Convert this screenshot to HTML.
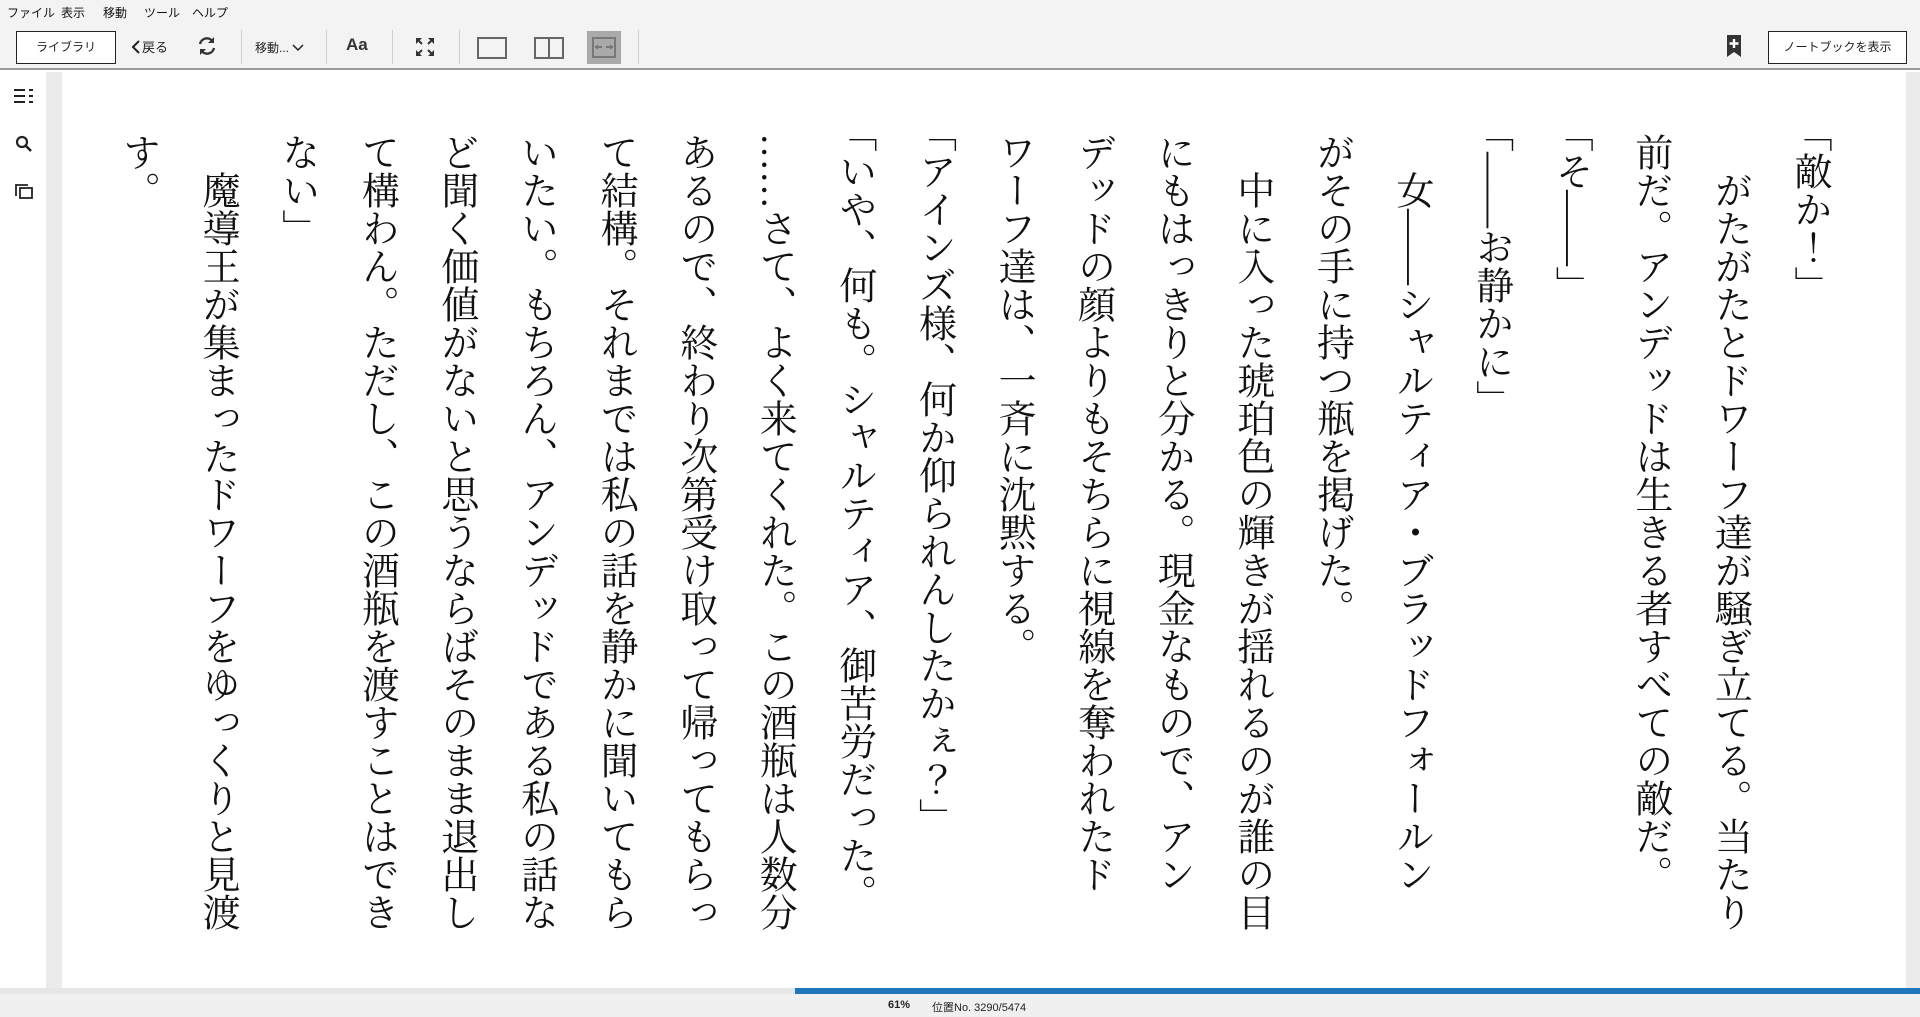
<!DOCTYPE html>
<html><head><meta charset="utf-8"><style>
*{margin:0;padding:0;box-sizing:border-box}
body{width:1920px;height:1017px;overflow:hidden;background:#fff;font-family:"Liberation Sans","Noto Sans CJK JP",sans-serif;position:relative}
.menu{position:absolute;left:0;top:0;width:1920px;height:22px;background:#f3f3f3;font-size:12px;color:#111}
.menu span{position:absolute;top:4px}
.tb{position:absolute;left:0;top:22px;width:1920px;height:48px;background:#f3f3f3;border-bottom:2px solid #9a9a9a}
.btn{position:absolute;top:9px;height:33px;border:1.5px solid #222;background:#fff;font-size:12px;text-align:center;line-height:31px;color:#222}
.sep{position:absolute;top:8px;width:1px;height:34px;background:#cfcfcf}
.ab{position:absolute}
.side{position:absolute;left:0;top:72px;width:46px;height:916px;background:#fff}
.gl{position:absolute;left:46px;top:72px;width:16px;height:916px;background:#ebebeb}
.gr{position:absolute;left:1906px;top:72px;width:14px;height:916px;background:#ebebeb}
.prog{position:absolute;left:0;top:988px;width:1920px;height:6px;background:#e6e6e6}
.prog div{position:absolute;left:795px;top:0;width:1125px;height:6px;background:#1f76bb}
.status{position:absolute;left:0;top:994px;width:1920px;height:23px;background:#f0f0f0;font-size:11px;color:#222}
.text{position:absolute;top:133px;right:72px;height:800px;writing-mode:vertical-rl;font-family:"Liberation Serif","Noto Serif CJK JP","Noto Serif CJK SC",serif;font-size:38px;line-height:79.6px;white-space:nowrap;color:#111;text-spacing-trim:trim-start}
</style></head><body>
<div class="menu"><span style="left:7px">ファイル</span><span style="left:61px">表示</span><span style="left:103px">移動</span><span style="left:144px">ツール</span><span style="left:192px">ヘルプ</span></div>
<div class="tb">
<div class="btn" style="left:16px;width:100px">ライブラリ</div>
<div class="ab" style="left:130px;top:15px;font-size:13px;color:#222"><svg width="12" height="16" style="vertical-align:-3px"><path d="M9 2L3 8l6 6" stroke="#222" stroke-width="2" fill="none"/></svg>戻る</div>
<svg class="ab" style="left:196px;top:13px" width="22" height="22" viewBox="0 0 22 22"><path d="M4 9a7 7 0 0 1 13-2M18 13a7 7 0 0 1-13 2" stroke="#333" stroke-width="2.4" fill="none"/><path d="M18 2v6h-6z M4 20v-6h6z" fill="#333"/></svg>
<div class="sep" style="left:241px"></div>
<div class="ab" style="left:255px;top:17px;font-size:12px;color:#222">移動... <svg width="12" height="8"><path d="M1 1l5 5 5-5" stroke="#222" stroke-width="1.5" fill="none"/></svg></div>
<div class="sep" style="left:326px"></div>
<div class="ab" style="left:346px;top:13px;font-size:17px;font-weight:bold;color:#333">Aa</div>
<div class="sep" style="left:392px"></div>
<svg class="ab" style="left:415px;top:15px" width="20" height="20" viewBox="0 0 20 20"><g stroke="#333" stroke-width="2" fill="none"><path d="M2 2l5 5M18 2l-5 5M2 18l5-5M18 18l-5-5"/></g><path d="M1 1h6L1 7zM19 1h-6l6 6zM1 19h6l-6-6zM19 19h-6l6-6z" fill="#333"/></svg>
<div class="sep" style="left:459px"></div>
<div class="ab" style="left:477px;top:15px;width:30px;height:22px;border:2px solid #666"></div>
<div class="ab" style="left:534px;top:15px;width:30px;height:22px;border:2px solid #666"><div style="position:absolute;left:12px;top:0;width:2px;height:18px;background:#666"></div></div>
<div class="ab" style="left:587px;top:9px;width:34px;height:33px;background:#a9a9a9"><svg width="34" height="33"><g stroke="#777" stroke-width="2" fill="none"><rect x="6" y="7" width="22" height="19"/><path d="M8 16h7M19 16h7"/></g><path d="M8 16l3-3v6zM26 16l-3-3v6z" fill="#777"/></svg></div>
<div class="sep" style="left:638px"></div>
<svg class="ab" style="left:1727px;top:13px" width="14" height="22" viewBox="0 0 14 22"><path d="M0 0h14v22l-7-5-7 5z" fill="#333"/><path d="M7 4v9M2.5 8.5h9" stroke="#fff" stroke-width="2.4"/></svg>
<div class="btn" style="left:1768px;width:139px">ノートブックを表示</div>
</div>
<div class="side">
<svg class="ab" style="left:14px;top:16px" width="20" height="16"><g stroke="#222" stroke-width="2"><path d="M0 2h11M0 8h11M0 14h11M15 2h4M15 8h4M15 14h4"/></g></svg>
<svg class="ab" style="left:15px;top:63px" width="18" height="18"><circle cx="7" cy="7" r="5" stroke="#222" stroke-width="2.2" fill="none"/><path d="M11 11l5 5" stroke="#222" stroke-width="2.6"/></svg>
<svg class="ab" style="left:15px;top:111px" width="18" height="16"><path d="M1 13V2h12" stroke="#222" stroke-width="1.8" fill="none"/><rect x="5" y="5" width="12" height="10" stroke="#222" stroke-width="1.8" fill="none"/></svg>
</div>
<div class="gl"></div><div class="gr"></div>
<div class="text">「敵か！」<br>　がたがたとドワーフ達が騒ぎ立てる。当たり<br>前だ。アンデッドは生きる者すべての敵だ。<br>「そ――」<br>「――お静かに」<br>　女――シャルティア・ブラッドフォールン<br>がその手に持つ瓶を掲げた。<br>　中に入った琥珀色の輝きが揺れるのが誰の目<br>にもはっきりと分かる。現金なもので、アン<br>デッドの顔よりもそちらに視線を奪われたド<br>ワーフ達は、一斉に沈黙する。<br>「アインズ様、何か仰られんしたかぇ？」<br>「いや、何も。シャルティア、御苦労だった。<br>……さて、よく来てくれた。この酒瓶は人数分<br>あるので、終わり次第受け取って帰ってもらっ<br>て結構。それまでは私の話を静かに聞いてもら<br>いたい。もちろん、アンデッドである私の話な<br>ど聞く価値がないと思うならばそのまま退出し<br>て構わん。ただし、この酒瓶を渡すことはでき<br>ない」<br>　魔導王が集まったドワーフをゆっくりと見渡<br>す。</div>
<div class="prog"><div></div></div>
<div class="status"><span class="ab" style="left:888px;top:5px;font-weight:bold">61%</span><span class="ab" style="left:932px;top:5px">位置No. 3290/5474</span></div>
</body></html>
